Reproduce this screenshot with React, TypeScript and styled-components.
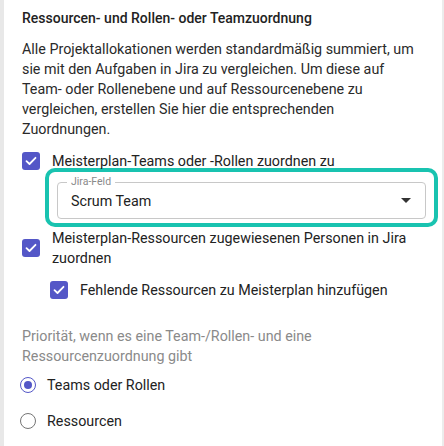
import React from "react";
import styled, { createGlobalStyle } from "styled-components";

const GlobalStyle = createGlobalStyle`
  html, body {
    margin: 0;
    padding: 0;
    background: #ffffff;
  }
  body {
    font-family: Roboto, "Liberation Sans", sans-serif;
    color: #212121;
  }
`;

const Panel = styled.div`
  box-sizing: border-box;
  height: 446px;
  border-left: 4px solid #e8e8e8;
  border-right: 2px solid #ececec;
  padding: 8px 18px 0 18px;
  overflow: hidden;
`;

const Title = styled.div`
  font-size: 14px;
  font-weight: 500;
  line-height: 20px;
  color: #222;
`;

const Paragraph = styled.p`
  margin: 11px 0 0 0;
  font-size: 14.3px;
  line-height: 20px;
  color: #2a2a2a;
`;

const Row = styled.label<{ $indent?: number; $mt?: number }>`
  display: flex;
  align-items: center;
  gap: 12px;
  margin-top: ${p => p.$mt ?? 0}px;
  margin-left: ${p => p.$indent ?? 0}px;
  font-size: 14.3px;
  line-height: 20px;
  color: #222;
`;

const Box = styled.span`
  flex: none;
  width: 18px;
  height: 18px;
  border-radius: 3px;
  background: #5457c7;
  display: flex;
  align-items: center;
  justify-content: center;
`;

const Highlight = styled.div`
  margin: -3px -14px 0 23px;
  border: 4px solid #19c3b0;
  border-radius: 10px;
  padding: 10px 8px 4px 8px;
`;

const Select = styled.div`
  position: relative;
  box-sizing: border-box;
  height: 37px;
  border: 1px solid #c8c8c8;
  border-radius: 4px;
  display: flex;
  align-items: center;
  justify-content: space-between;
  padding: 0 14px 0 13px;
  font-size: 14.3px;
  color: #222;
`;

const FloatLabel = styled.span`
  position: absolute;
  top: -8px;
  left: 9px;
  padding: 0 4px;
  background: #fff;
  font-size: 10.5px;
  line-height: 14px;
  color: #8a8a8a;
`;

const Arrow = styled.span`
  width: 0;
  height: 0;
  border-left: 5px solid transparent;
  border-right: 5px solid transparent;
  border-top: 5px solid #333;
`;

const Hint = styled.p`
  margin: 26px 0 0 0;
  font-size: 14.3px;
  line-height: 20px;
  color: #8a8a8a;
`;

const RadioRow = styled.label<{ $mt: number }>`
  display: flex;
  align-items: center;
  gap: 11px;
  margin-top: ${p => p.$mt}px;
  margin-left: -2px;
  font-size: 14.3px;
  line-height: 20px;
  color: #222;
`;

const Ring = styled.span<{ $on?: boolean }>`
  flex: none;
  box-sizing: border-box;
  width: 16px;
  height: 16px;
  border-radius: 50%;
  border: 1.6px solid ${p => (p.$on ? "#5457c7" : "#757575")};
  display: flex;
  align-items: center;
  justify-content: center;

  &::after {
    content: "";
    display: ${p => (p.$on ? "block" : "none")};
    width: 8px;
    height: 8px;
    border-radius: 50%;
    background: #5457c7;
  }
`;

const Check = () => (
  <Box>
    <svg width="12" height="10" viewBox="0 0 12 10">
      <path d="M1.5 5.2 L4.5 8 L10.5 1.8" fill="none" stroke="#fff" strokeWidth="1.8" strokeLinecap="round" strokeLinejoin="round" />
    </svg>
  </Box>
);

export default function App() {
  return (
    <>
      <GlobalStyle />
      <Panel>
        <Title>Ressourcen- und Rollen- oder Teamzuordnung</Title>
        <Paragraph>
          Alle Projektallokationen werden standardmäßig summiert, um sie mit den Aufgaben in Jira zu
          vergleichen. Um diese auf Team- oder Rollenebene und auf Ressourcenebene zu vergleichen,
          erstellen Sie hier die entsprechenden Zuordnungen.
        </Paragraph>
        <Row $mt={12}>
          <Check />
          <span>Meisterplan-Teams oder -Rollen zuordnen zu</span>
        </Row>
        <Highlight>
          <Select>
            <FloatLabel>Jira-Feld</FloatLabel>
            <span>Scrum Team</span>
            <Arrow />
          </Select>
        </Highlight>
        <Row $mt={1}>
          <Check />
          <span>Meisterplan-Ressourcen zugewiesenen Personen in Jira zuordnen</span>
        </Row>
        <Row $mt={12} $indent={28}>
          <Check />
          <span>Fehlende Ressourcen zu Meisterplan hinzufügen</span>
        </Row>
        <Hint>Priorität, wenn es eine Team-/Rollen- und eine Ressourcenzuordnung gibt</Hint>
        <RadioRow $mt={9}>
          <Ring $on />
          <span>Teams oder Rollen</span>
        </RadioRow>
        <RadioRow $mt={16}>
          <Ring />
          <span>Ressourcen</span>
        </RadioRow>
      </Panel>
    </>
  );
}
